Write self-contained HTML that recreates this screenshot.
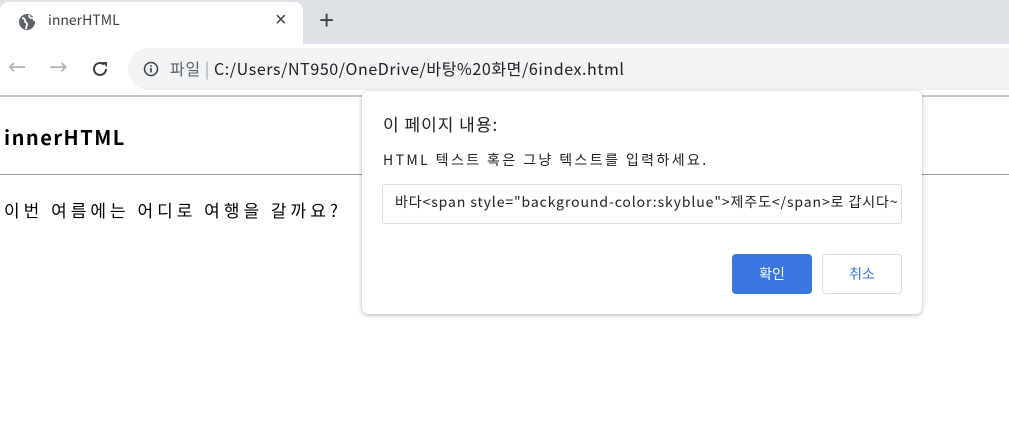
<!DOCTYPE html>
<html><head><meta charset="utf-8"><style>
*{margin:0;padding:0;box-sizing:border-box}
body{width:1009px;height:433px;overflow:hidden;background:#fff;font-family:"Noto Sans CJK KR","Liberation Sans",sans-serif;position:relative}
.abs{position:absolute;line-height:1.2;white-space:nowrap}
</style></head><body>
<div class="abs" style="left:0;top:0;width:1009px;height:44px;background:#dee1e6"></div>
<div class="abs" style="left:0;top:2px;width:303px;height:42px;background:#fff;border-radius:8px 8px 0 0"></div>
<svg class="abs" style="left:18px;top:13px" width="18" height="18" viewBox="0 0 18 18"><circle cx="9" cy="9" r="8" fill="#5f6368"/><path d="M4 5c2 0 3 1 3 3s2 1 2 3-1 3-1 5M11 2c0 2 1 3 3 3s2 2 2 3" stroke="#fff" stroke-width="1.8" fill="none"/></svg>
<div class="abs" style="left:48px;top:12px;font-size:14px;color:#3c4043">innerHTML</div>
<div class="abs" style="left:275px;top:8px;font-size:20px;color:#3c4043;font-family:'Liberation Sans'">×</div>
<div class="abs" style="left:319px;top:5px;font-size:26px;color:#3c4043;font-family:'Liberation Sans'">+</div>
<div class="abs" style="left:0;top:44px;width:1009px;height:52px;background:#fff"></div>
<div class="abs" style="left:8px;top:55px;font-size:22px;color:#b0b3b7;font-family:'DejaVu Sans'">←</div>
<div class="abs" style="left:49px;top:55px;font-size:22px;color:#b0b3b7;font-family:'DejaVu Sans'">→</div>
<svg class="abs" style="left:91px;top:60px" width="18" height="18" viewBox="0 0 18 18"><path d="M15 9a6 6 0 1 1-2-4.5" stroke="#3c4043" stroke-width="2" fill="none"/><path d="M11 2h5v5z" fill="#3c4043"/></svg>
<div class="abs" style="left:128px;top:48px;width:881px;height:42px;background:#f1f3f4;border-radius:21px 0 0 21px"></div>
<svg class="abs" style="left:143px;top:61px" width="16" height="16" viewBox="0 0 16 16"><circle cx="8" cy="8" r="6.5" stroke="#3c4043" stroke-width="1.5" fill="none"/><rect x="7.2" y="7" width="1.6" height="4.5" fill="#3c4043"/><rect x="7.2" y="4.2" width="1.6" height="1.6" fill="#3c4043"/></svg>
<div class="abs" style="left:170px;top:59px;font-size:16px;color:#5f6368;letter-spacing:0.6px">파일 <span style="color:#9aa0a6">|</span> <span style="color:#202124">C:/Users/NT950/OneDrive/바탕%20화면/6index.html</span></div>
<div class="abs" style="left:0;top:95px;width:1009px;height:2px;background:#c8c8c8"></div>
<div class="abs" style="left:4px;top:125px;font-size:20px;font-weight:bold;color:#000;letter-spacing:1.5px">innerHTML</div>
<div class="abs" style="left:0;top:174px;width:1009px;height:1px;background:#999"></div>
<div class="abs" style="left:4px;top:200px;font-size:17px;color:#000;letter-spacing:4px">이번 여름에는 어디로 여행을 갈까요?</div>
<div class="abs" style="left:362px;top:91px;width:560px;height:223px;background:#fff;border-radius:6px;box-shadow:0 1px 5px rgba(0,0,0,.3)"></div>
<div class="abs" style="left:383px;top:114px;font-size:17px;color:#202124;letter-spacing:1px">이 페이지 내용:</div>
<div class="abs" style="left:383px;top:152px;font-size:14px;color:#202124;letter-spacing:2.4px">HTML 텍스트 혹은 그냥 텍스트를 입력하세요.</div>
<div class="abs" style="left:382px;top:184px;width:520px;height:40px;border:1px solid #dadce0;border-radius:3px;padding:9px 0 0 12px;font-size:14px;color:#202124;overflow:hidden;letter-spacing:0.9px">바다&lt;span style="background-color:skyblue"&gt;제주도&lt;/span&gt;로 갑시다~</div>
<div class="abs" style="left:732px;top:254px;width:80px;height:40px;background:#3a75e0;border-radius:4px;color:#fff;font-size:14px;text-align:center;line-height:40px">확인</div>
<div class="abs" style="left:822px;top:254px;width:80px;height:40px;border:1px solid #dadce0;border-radius:4px;color:#3a75e0;font-size:14px;text-align:center;line-height:38px">취소</div>
</body></html>
